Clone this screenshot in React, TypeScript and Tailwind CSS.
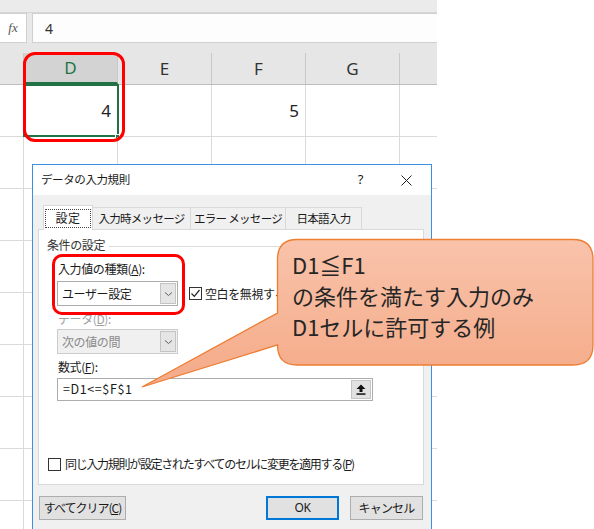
import React from "react";

const cols = [24, 94, 94, 94, 94, 37];
const headers = ["", "D", "E", "F", "G", ""];

function Checkbox({ checked }: { checked?: boolean }) {
  return (
    <div className="w-[13px] h-[13px] border border-[#333] bg-white flex items-center justify-center shrink-0">
      {checked && (
        <svg width="11" height="11" viewBox="0 0 11 11">
          <path d="M1.5 5.5 L4.3 8.3 L9.5 2" fill="none" stroke="#222" strokeWidth="1.2" />
        </svg>
      )}
    </div>
  );
}

function Chevron({ color = "#606060" }: { color?: string }) {
  return (
    <svg width="9" height="6" viewBox="0 0 9 6">
      <path d="M1 1.5 L4.5 4.5 L8 1.5" fill="none" stroke={color} strokeWidth="1" />
    </svg>
  );
}

function Select({ value, disabled }: { value: string; disabled?: boolean }) {
  return (
    <div
      className={`w-[121px] h-[25px] border flex items-stretch ${
        disabled ? "border-[#cccccc] bg-[#f0f0f0] text-[#8a8a8a]" : "border-[#adadad] bg-white text-[#1a1a1a]"
      }`}
    >
      <div className="flex-1 flex items-center pl-[4px] text-[12px] whitespace-nowrap">{value}</div>
      <div className="w-[16px] m-[1px] bg-[#e5e5e5] border border-[#c4c4c4] flex items-center justify-center">
        <Chevron />
      </div>
    </div>
  );
}

export default function App() {
  return (
    <div className="relative w-[594px] h-[529px] bg-white overflow-hidden font-['Noto_Sans_CJK_JP',sans-serif]">
      {/* Excel sheet */}
      <div className="w-[437px] flex flex-col">
        <div className="h-[13px] bg-[#ebebeb] border-b border-[#d6d6d6]" />
        <div className="h-[30px] bg-[#e9e9e9] flex items-stretch">
          <div className="w-[27px] bg-white border border-[#d0d0d0] border-l-0 flex items-center justify-center text-[13px] italic text-[#555] font-['Liberation_Serif',serif]">
            fx
          </div>
          <div className="flex-1 ml-[5px] bg-[#fdfdfd] border border-[#d0d0d0] border-r-0 flex items-center pl-[12px] text-[14px] text-[#333] font-['Noto_Sans',sans-serif]">
            4
          </div>
        </div>
        {/* column headers */}
        <div className="h-[42px] bg-[#e6e6e6] flex items-end border-b border-[#bdbdbd]">
          {cols.map((w, i) => (
            <div
              key={i}
              style={{ width: w }}
              className={`h-[31px] flex items-center justify-center text-[17px] font-['Noto_Sans',sans-serif] ${
                i < 5 ? "border-r border-[#c8c8c8]" : ""
              } ${i === 1 ? "bg-[#d3d3d3] text-[#217346] border-b-2 border-b-[#217346]" : "text-[#333]"}`}
            >
              {headers[i]}
            </div>
          ))}
        </div>
        {/* rows */}
        {Array.from({ length: 9 }).map((_, r) => (
          <div key={r} className="h-[52px] flex border-b border-[#dadada]">
            {cols.map((w, i) => (
              <div
                key={i}
                style={{ width: w }}
                className={`relative flex items-center justify-end pr-[6px] text-[17px] text-[#222] font-['Noto_Sans',sans-serif] ${
                  i < 5 ? "border-r border-[#dadada]" : ""
                } ${r === 0 && i === 1 ? "outline-2 outline-[#217346] -outline-offset-1" : ""}`}
              >
                {r === 0 && i === 1 ? "4" : r === 0 && i === 3 ? "5" : ""}
                {r === 0 && i === 1 && (
                  <div className="absolute right-[-3px] bottom-[-3px] w-[5px] h-[5px] bg-[#217346] border border-white" />
                )}
              </div>
            ))}
          </div>
        ))}
      </div>

      {/* red highlight around D */}
      <div className="absolute left-[23px] top-[52px] w-[102px] h-[90px] border-[3px] border-[#ff0000] rounded-[12px]" />

      {/* dialog */}
      <div className="absolute left-[32px] top-[164px] w-[400px] h-[380px] border border-[#3d8fdf] bg-[#f0f0f0] flex flex-col text-[#1a1a1a] text-[12px] tracking-[-0.4px]">
        <div className="h-[30px] bg-white flex items-center pl-[8px] shrink-0">
          <span className="text-[11.5px]">データの入力規則</span>
          <span className="ml-auto text-[13px] mr-[38px] font-['Noto_Sans',sans-serif]">?</span>
          <svg width="11" height="11" viewBox="0 0 11 11" className="mr-[19px]">
            <path d="M0.5 0.5 L10.5 10.5 M10.5 0.5 L0.5 10.5" stroke="#222" strokeWidth="1" />
          </svg>
        </div>

        {/* tabs */}
        <div className="flex items-end ml-[10px] mt-[9px] h-[25px] whitespace-nowrap text-[11.5px] tracking-[-0.7px]">
          <div className="w-[50px] h-[25px] bg-white border border-[#d9d9d9] border-b-0 relative z-10 -mb-px flex items-center justify-center">
            <div className="w-[46px] h-[19px] border border-dotted border-[#444] flex items-center justify-center text-[12px] tracking-[0.5px]">
              設定
            </div>
          </div>
          <div className="w-[98px] h-[22px] border border-[#d9d9d9] border-b-0 border-l-0 flex items-center justify-center">
            入力時メッセージ
          </div>
          <div className="w-[95px] h-[22px] border border-[#d9d9d9] border-b-0 border-l-0 flex items-center justify-center">
            エラー メッセージ
          </div>
          <div className="w-[76px] h-[22px] border border-[#d9d9d9] border-b-0 border-l-0 flex items-center justify-center">
            日本語入力
          </div>
        </div>

        {/* panel */}
        <div className="relative ml-[5px] w-[386px] h-[256px] bg-white border border-[#d9d9d9] flex flex-col">
          <div className="flex items-center pl-[8px] pt-[8px] leading-[14px] text-[#333]">
            <span>条件の設定</span>
            <div className="flex-1 h-px bg-[#dcdcdc] ml-[4px] mr-[8px] mt-[3px]" />
          </div>
          <div className="pl-[18px] flex flex-col">
            <div className="mt-[10px] leading-[14px] pl-[1px]">
              入力値の種類(<span className="underline">A</span>):
            </div>
            <div className="mt-[5px] flex items-center">
              <Select value="ユーザー設定" />
              <div className="ml-[11px] flex items-center gap-[3px] whitespace-nowrap">
                <Checkbox checked />
                <span>空白を無視する(B)</span>
              </div>
            </div>
            <div className="mt-[6px] leading-[14px] pl-[1px] text-[#a0a0a0]">
              データ(<span className="underline">D</span>):
            </div>
            <div className="mt-[3px]">
              <Select value="次の値の間" disabled />
            </div>
            <div className="mt-[6px] leading-[14px] pl-[1px]">
              数式(<span className="underline">F</span>):
            </div>
            <div className="mt-[4px] w-[316px] h-[23px] border border-[#adadad] bg-white flex items-stretch">
              <div className="flex-1 flex items-center pl-[5px] tracking-[0.6px] text-[12.5px]">
                =D1&lt;=$F$1
              </div>
              <div className="w-[20px] m-[1px] bg-[#e1e1e1] border border-[#c4c4c4] flex items-center justify-center">
                <svg width="10" height="11" viewBox="0 0 10 11">
                  <path d="M5 0.5 L9.5 5 H6.5 V8 H3.5 V5 H0.5 Z" fill="#111" />
                  <rect x="0.5" y="9.3" width="9" height="1.5" fill="#111" />
                </svg>
              </div>
            </div>
          </div>
          <div className="mt-auto mb-[11px] pl-[9px] flex items-center gap-[4px] whitespace-nowrap">
            <Checkbox />
            <span className="tracking-[-1.3px]">
              同じ入力規則が設定されたすべてのセルに変更を適用する(<span className="underline">P</span>)
            </span>
          </div>

          {/* red highlight around type selector */}
          <div className="absolute left-[13px] top-[24px] w-[133px] h-[61px] border-[3px] border-[#ff0000] rounded-[10px]" />
        </div>

        {/* buttons */}
        <div className="mt-[11px] flex items-center pl-[6px] pr-[8px] whitespace-nowrap">
          <div className="w-[87px] h-[24px] bg-[#e1e1e1] border border-[#adadad] flex items-center justify-center tracking-[-1px]">
            すべてクリア(<span className="underline">C</span>)
          </div>
          <div className="ml-auto w-[73px] h-[24px] bg-[#e1e1e1] border-2 border-[#0078d7] flex items-center justify-center font-['Noto_Sans',sans-serif] text-[12px]">
            OK
          </div>
          <div className="ml-[11px] w-[73px] h-[24px] bg-[#e1e1e1] border border-[#adadad] flex items-center justify-center tracking-[-0.8px]">
            キャンセル
          </div>
        </div>
      </div>

      {/* callout */}
      <svg className="absolute left-0 top-0 pointer-events-none" width="594" height="529" viewBox="0 0 594 529">
        <defs>
          <linearGradient id="cg" x1="0" y1="0" x2="0" y2="1">
            <stop offset="0" stopColor="#f9c3aa" />
            <stop offset="1" stopColor="#f4aa88" />
          </linearGradient>
        </defs>
        <path
          d="M297 239.5 H573 Q593 239.5 593 259.5 V345 Q593 365 573 365 H297 Q277.5 365 277.5 345 L142 387 L277.5 313 V259.5 Q277.5 239.5 297 239.5 Z"
          fill="url(#cg)"
          stroke="#ed7d31"
          strokeWidth="1.3"
        />
      </svg>
      <div className="absolute left-[292px] top-[249px] text-[22px] leading-[31px] text-[#262626] whitespace-nowrap">
        <div>D1≦F1</div>
        <div>の条件を満たす入力のみ</div>
        <div>D1セルに許可する例</div>
      </div>
    </div>
  );
}
